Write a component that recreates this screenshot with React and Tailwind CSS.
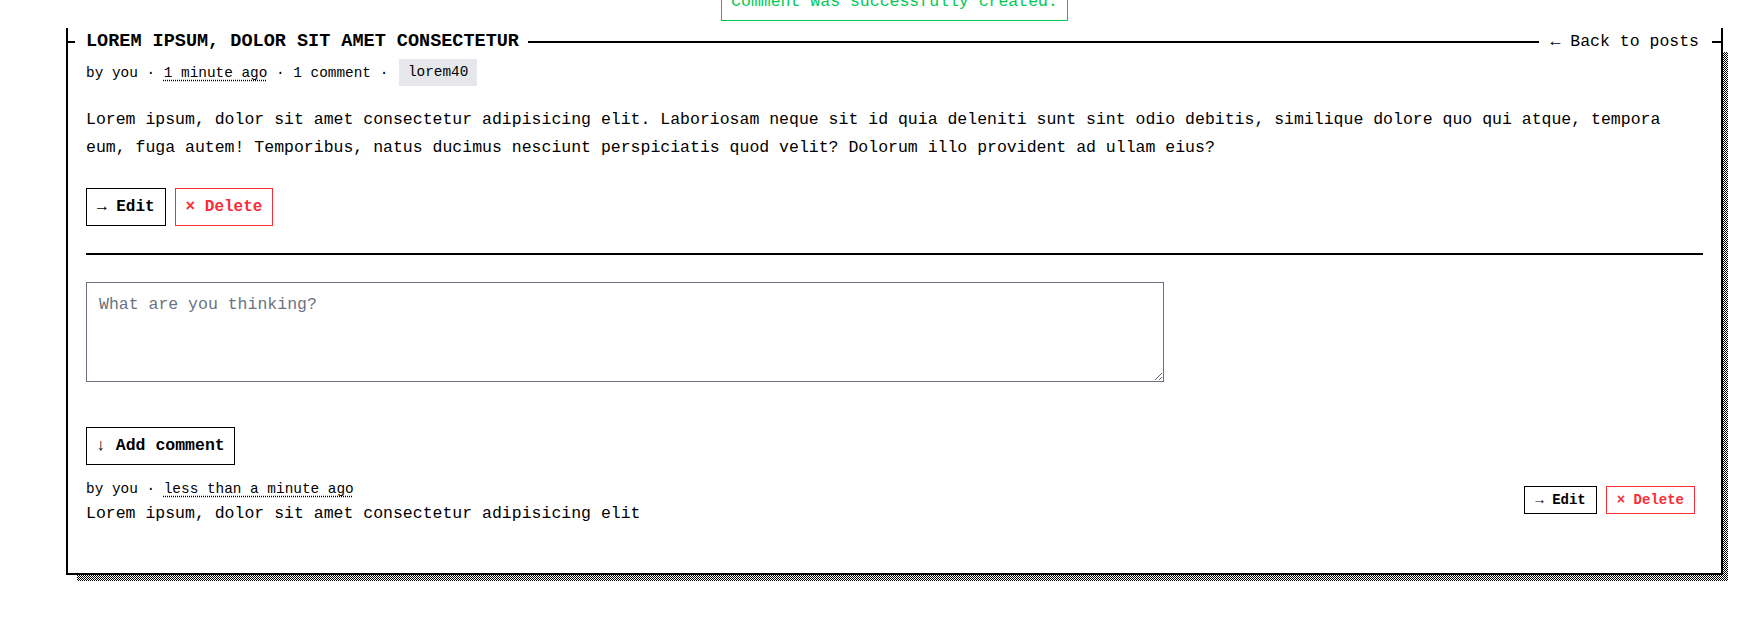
import React from 'react';

const mono = { fontFamily: '"Liberation Mono", "DejaVu Sans Mono", monospace' };

function App() {
  return (
    <div className="w-[1756px] h-[626px] bg-white overflow-hidden text-black" style={mono}>
      <div className="ml-[66px] w-[1657px] flex flex-col">
        {/* flash message, partly scrolled off */}
        <div className="self-center -mt-[17px] border border-green-500 text-green-500 px-[9px] py-1 text-[16.5px] leading-[28px]">
          Comment was successfully created.
        </div>

        <div className="relative mt-[20px]">
          <div className="absolute left-[11px] top-[11px] -right-[5px] -bottom-[6px] bg-[repeating-conic-gradient(#000_0%_25%,#fff_0%_50%)] bg-[length:2px_2px]" />
          <div className="relative bg-white border-x-2 border-b-2 border-black px-[18px] pb-[45px]">
            {/* header line with title and back link */}
            <div className="-mx-[20px] -mt-[13px] h-[28px] flex items-center">
              <div className="w-[9px] h-[2px] bg-black" />
              <h1 className="pl-[11px] pr-[9px] text-[18.5px] leading-[28px] font-bold uppercase whitespace-nowrap">
                Lorem ipsum, dolor sit amet consectetur
              </h1>
              <div className="flex-1 h-[2px] bg-black" />
              <a className="pl-[11px] pr-[13px] text-[16.5px] leading-[28px] whitespace-nowrap cursor-pointer">
                ← Back to posts
              </a>
              <div className="w-[11px] h-[2px] bg-black" />
            </div>

            <div className="mt-[3px] flex items-center text-[14.4px] leading-[20px] whitespace-pre">
              <span>by you · </span>
              <span className="underline decoration-dotted underline-offset-[3px]">1 minute ago</span>
              <span> · 1 comment · </span>
              <span className="ml-[2px] bg-gray-200 px-[9px] leading-[27px]">lorem40</span>
            </div>

            <p className="mt-[20px] text-[16.5px] leading-[28px]">
              Lorem ipsum, dolor sit amet consectetur adipisicing elit. Laboriosam neque sit id quia deleniti sunt sint odio debitis, similique dolore quo qui atque, tempora eum, fuga autem! Temporibus, natus ducimus nesciunt perspiciatis quod velit? Dolorum illo provident ad ullam eius?
            </p>

            <div className="mt-[26px] flex gap-[9px]">
              <button className="border border-black px-[10px] py-[6px] text-[16px] leading-[24px] font-bold">→ Edit</button>
              <button className="border border-red-500 text-red-500 px-[10px] py-[6px] text-[16px] leading-[24px] font-bold">× Delete</button>
            </div>

            <hr className="mt-[27px] border-0 h-[2px] bg-black" />

            <textarea
              placeholder="What are you thinking?"
              className="mt-[27px] block w-2/3 h-[100px] border border-gray-500 px-3 py-2 text-[16.5px] leading-[28px] placeholder:text-gray-500 outline-none"
              style={mono}
            />

            <button className="mt-[45px] self-start border border-black px-[9px] py-[5px] text-[16.5px] leading-[26px] font-bold">↓ Add comment</button>

            <div className="mt-[14px] pr-2 flex justify-between items-start">
              <div>
                <div className="text-[14.4px] leading-[20px] whitespace-pre">
                  by you · <span className="underline decoration-dotted underline-offset-[3px]">less than a minute ago</span>
                </div>
                <p className="mt-[1px] text-[16.5px] leading-[28px]">Lorem ipsum, dolor sit amet consectetur adipisicing elit</p>
              </div>
              <div className="mt-[7px] flex gap-[9px]">
                <button className="border border-black px-[10px] py-[3px] text-[14px] leading-[20px] font-bold">→ Edit</button>
                <button className="border border-red-500 text-red-500 px-[10px] py-[3px] text-[14px] leading-[20px] font-bold">× Delete</button>
              </div>
            </div>
          </div>
        </div>
      </div>
    </div>
  );
}

export default App;
